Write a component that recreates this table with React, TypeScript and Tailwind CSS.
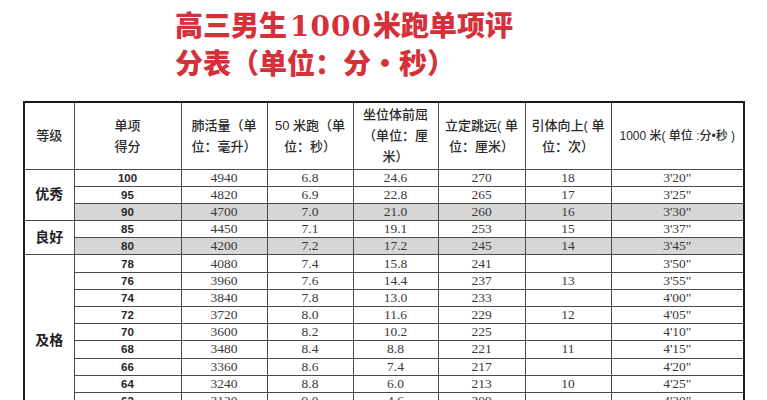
import React from 'react';

type Row = [string, string, string, string, string, string, string];

const rows: Row[] = [
    ['100', '4940', '6.8', '24.6', '270', '18', `3'20"`],
    ['95', '4820', '6.9', '22.8', '265', '17', `3'25"`],
    ['90', '4700', '7.0', '21.0', '260', '16', `3'30"`],
    ['85', '4450', '7.1', '19.1', '253', '15', `3'37"`],
    ['80', '4200', '7.2', '17.2', '245', '14', `3'45"`],
    ['78', '4080', '7.4', '15.8', '241', '', `3'50"`],
    ['76', '3960', '7.6', '14.4', '237', '13', `3'55"`],
    ['74', '3840', '7.8', '13.0', '233', '', `4'00"`],
    ['72', '3720', '8.0', '11.6', '229', '12', `4'05"`],
    ['70', '3600', '8.2', '10.2', '225', '', `4'10"`],
    ['68', '3480', '8.4', '8.8', '221', '11', `4'15"`],
    ['66', '3360', '8.6', '7.4', '217', '', `4'20"`],
    ['64', '3240', '8.8', '6.0', '213', '10', `4'25"`],
    ['62', '3120', '9.0', '4.6', '209', '', `4'30"`],
    ['60', '3000', '9.2', '3.2', '205', '9', `4'35"`],
];

// grade label shown on the first row of each band
const grades: Record<number, { label: string; span: number }> = {
    0: { label: '优秀', span: 3 },
    3: { label: '良好', span: 2 },
    5: { label: '及格', span: 10 },
};

const shaded = new Set([2, 4]);

const cjk = { fontFamily: '"Liberation Sans", "Noto Sans CJK SC", sans-serif' };
const serif = { fontFamily: '"Liberation Serif", "Noto Sans CJK SC", serif' };
const titleFont = { fontFamily: '"Noto Sans CJK SC", sans-serif' };
const digitFont = { fontFamily: '"DejaVu Serif", serif' };

const HeadCell = ({ children }: { children: React.ReactNode }) => (
    <th className="border border-[#4a4a4a] p-0 text-[13px] font-medium leading-[21px] text-[#2a2a2a]">
        {children}
    </th>
);

export default function App() {
    return (
        <div className="h-[400px] w-[767px] overflow-hidden bg-white">
            {/* Title */}
            <div
                className="pl-[175px] pt-[7px] text-[28px] font-black leading-[35.5px] text-[#d5313b]"
                style={titleFont}
            >
                <div>
                    高三男生
                    <span className="ml-[3px] mr-[1px] tracking-[1px]" style={digitFont}>
                        1000
                    </span>
                    米跑单项评
                </div>
                <div>分表（单位：分・秒）</div>
            </div>

            {/* Score table */}
            <table
                className="ml-[23px] mt-[21px] w-[720px] table-fixed border-collapse border-2 border-[#1a1a1a] text-center"
                style={cjk}
            >
                <colgroup>
                    <col className="w-[50px]" />
                    <col className="w-[107px]" />
                    <col className="w-[86px]" />
                    <col className="w-[86px]" />
                    <col className="w-[85px]" />
                    <col className="w-[87px]" />
                    <col className="w-[86px]" />
                    <col className="w-[133px]" />
                </colgroup>
                <thead>
                    <tr className="h-[67px]">
                        <HeadCell>等级</HeadCell>
                        <HeadCell>
                            单项
                            <br />
                            得分
                        </HeadCell>
                        <HeadCell>
                            肺活量（单
                            <br />
                            位：毫升）
                        </HeadCell>
                        <HeadCell>
                            50 米跑（单
                            <br />
                            位：秒）
                        </HeadCell>
                        <HeadCell>
                            坐位体前屈
                            <br />
                            （单位：厘
                            <br />
                            米）
                        </HeadCell>
                        <HeadCell>
                            立定跳远( 单
                            <br />
                            位：厘米）
                        </HeadCell>
                        <HeadCell>
                            引体向上( 单
                            <br />
                            位：次）
                        </HeadCell>
                        <th className="border border-[#4a4a4a] p-0 text-[12px] font-medium text-[#2a2a2a]">
                            1000 米( 单位 :分•秒 )
                        </th>
                    </tr>
                </thead>
                <tbody>
                    {rows.map((r, i) => {
                        const g = grades[i];
                        const bg = shaded.has(i) ? 'bg-[#d6d6d6]' : '';
                        return (
                            <tr key={r[0]} className="h-[17.2px]">
                                {g && (
                                    <td
                                        rowSpan={g.span}
                                        className="border border-[#4a4a4a] p-0 text-[14px] font-bold text-[#1f1f1f]"
                                    >
                                        {g.label}
                                    </td>
                                )}
                                <td
                                    className={`border border-[#4a4a4a] p-0 text-[11.5px] font-bold leading-[16px] text-[#262626] ${bg}`}
                                >
                                    {r[0]}
                                </td>
                                {r.slice(1).map((v, j) => (
                                    <td
                                        key={j}
                                        className={`border border-[#4a4a4a] p-0 text-[13.5px] leading-[16px] text-[#3a3a3a] ${bg}`}
                                        style={serif}
                                    >
                                        {v}
                                    </td>
                                ))}
                            </tr>
                        );
                    })}
                </tbody>
            </table>
        </div>
    );
}
